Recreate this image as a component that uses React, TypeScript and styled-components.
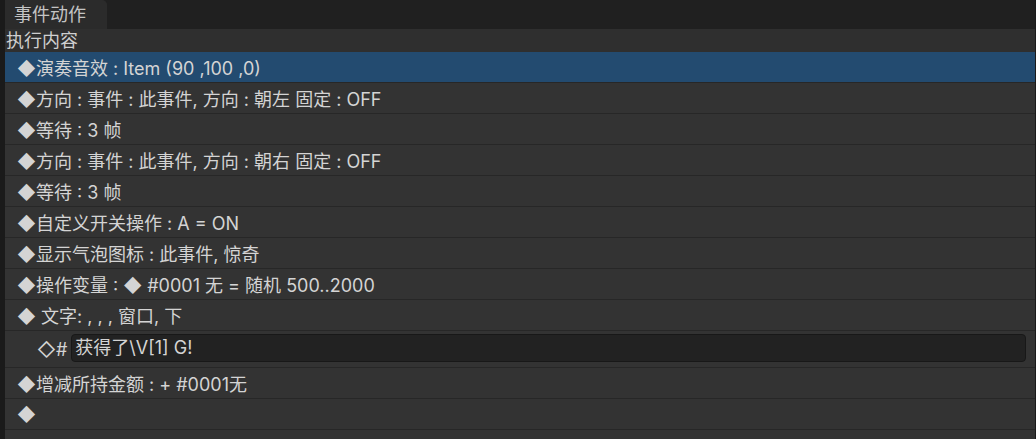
import React from "react";
import styled, { createGlobalStyle } from "styled-components";

const Global = createGlobalStyle`
  html, body { margin: 0; padding: 0; background: #1a1a1a; }
  body { font-family: Inter, "Noto Sans CJK SC", "DejaVu Sans", sans-serif; }
  #root { height: 439px; }
`;

const Shell = styled.div`
  display: flex;
  height: 439px;
  width: 1036px;
  overflow: hidden;
  background: #1a1a1a;
`;

const LeftStrip = styled.div`
  width: 5px;
  flex: none;
  background: #1a1a1a;
`;

const Main = styled.div`
  flex: 1;
  display: flex;
  flex-direction: column;
  background: #333333;
  margin-right: 1px;
`;

const TabBar = styled.div`
  height: 29px;
  flex: none;
  display: flex;
  align-items: flex-end;
  background: #202020;
`;

const Tab = styled.div`
  height: 29px;
  width: 102px;
  box-sizing: border-box;
  padding-left: 9px;
  background: #2b2b2b;
  border-top-right-radius: 5px;
  color: #c4c4c4;
  font-size: 18px;
  line-height: 30px;
`;

const SectionLabel = styled.div`
  height: 23px;
  flex: none;
  background: #2f2f2f;
  color: #cfcfcf;
  font-size: 18px;
  line-height: 23px;
  padding-left: 1px;
`;

const List = styled.div`
  display: flex;
  flex-direction: column;
`;

const Row = styled.div<{ $selected?: boolean; $tall?: boolean; $indent?: number }>`
  height: ${(p) => (p.$tall ? 37 : 31)}px;
  flex: none;
  display: flex;
  align-items: center;
  box-sizing: border-box;
  padding-left: ${(p) => p.$indent ?? 12}px;
  padding-right: 9px;
  border-bottom: 1px solid #272727;
  background: ${(p) => (p.$selected ? "#234b70" : "#333333")};
  color: #d4d4d4;
  font-size: 18px;
  white-space: pre;
`;

const Marker = styled.span`
  color: #d4d4d4;
`;

const TextBox = styled.div`
  flex: 1;
  height: 28px;
  margin-left: 4px;
  margin-top: -2px;
  box-sizing: border-box;
  border: 1px solid #181818;
  border-radius: 4px;
  background: #222222;
  padding-left: 3px;
  line-height: 26px;
  color: #d4d4d4;
  font-size: 18px;
`;

const rows: string[] = [
  "◆演奏音效 : Item (90 ,100 ,0)",
  "◆方向 : 事件 : 此事件, 方向 : 朝左 固定 : OFF",
  "◆等待 : 3 帧",
  "◆方向 : 事件 : 此事件, 方向 : 朝右 固定 : OFF",
  "◆等待 : 3 帧",
  "◆自定义开关操作 : A = ON",
  "◆显示气泡图标 : 此事件, 惊奇",
  "◆操作变量 : ◆ #0001 无 = 随机 500..2000",
  "◆ 文字: , , , 窗口, 下",
];

export default function App() {
  return (
    <>
      <Global />
      <Shell>
        <LeftStrip />
        <Main>
          <TabBar>
            <Tab>事件动作</Tab>
          </TabBar>
          <SectionLabel>执行内容</SectionLabel>
          <List>
            {rows.map((r, i) => (
              <Row key={i} $selected={i === 0}>
                {r}
              </Row>
            ))}
            <Row $tall $indent={32}>
              <Marker>◇#</Marker>
              <TextBox>获得了\V[1] G!</TextBox>
            </Row>
            <Row>◆增减所持金额 : + #0001无</Row>
            <Row>◆</Row>
            <Row> </Row>
          </List>
        </Main>
      </Shell>
    </>
  );
}
